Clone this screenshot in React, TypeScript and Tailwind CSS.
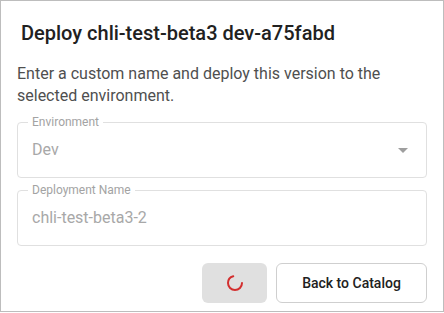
export default function App() {
  return (
    <div className="w-full h-[312px] bg-white border border-[#bdbdbd] font-['Roboto',sans-serif] flex flex-col">
      <h2 className="pt-5 pl-5 text-[20px] leading-6 font-medium text-[#212121]">
        Deploy chli-test-beta3 dev-a75fabd
      </h2>

      <p className="mt-[18px] px-4 text-[16px] leading-[22px] text-[#4f4f4f]">
        Enter a custom name and deploy this version to the selected environment.
      </p>

      <div className="mt-[15px] px-4 flex flex-col gap-3">
        {/* Environment select (disabled) */}
        <div className="relative h-14 border border-[#e0e0e0] rounded flex items-center justify-between pl-[14px] pr-[18px]">
          <span className="absolute -top-[9px] left-[10px] px-1 bg-white text-[12px] leading-4 text-[#a3a3a3]">
            Environment
          </span>
          <span className="text-[16px] text-[#a8a8a8]">Dev</span>
          <svg width="10" height="5" viewBox="0 0 10 5">
            <path d="M0 0 L10 0 L5 5 Z" fill="#9e9e9e" />
          </svg>
        </div>

        {/* Deployment name (disabled) */}
        <div className="relative h-14 border border-[#e0e0e0] rounded flex items-center pl-[14px]">
          <span className="absolute -top-[9px] left-[10px] px-1 bg-white text-[12px] leading-4 text-[#a3a3a3]">
            Deployment Name
          </span>
          <span className="text-[16px] text-[#a8a8a8]">chli-test-beta3-2</span>
        </div>
      </div>

      <div className="mt-[17px] px-4 flex justify-end gap-[9px]">
        <button className="w-[65px] h-10 rounded-md bg-[#e0e0e0] flex items-center justify-center">
          <svg width="18" height="18" viewBox="0 0 18 18">
            <circle
              cx="9"
              cy="9"
              r="7"
              fill="none"
              stroke="#d32f2f"
              strokeWidth="2"
              strokeDasharray="31 13"
              strokeLinecap="round"
            />
          </svg>
        </button>
        <button className="w-[151px] h-10 rounded-md border border-[#cfcfcf] bg-white text-[14px] font-medium text-[#212121]">
          Back to Catalog
        </button>
      </div>
    </div>
  );
}
